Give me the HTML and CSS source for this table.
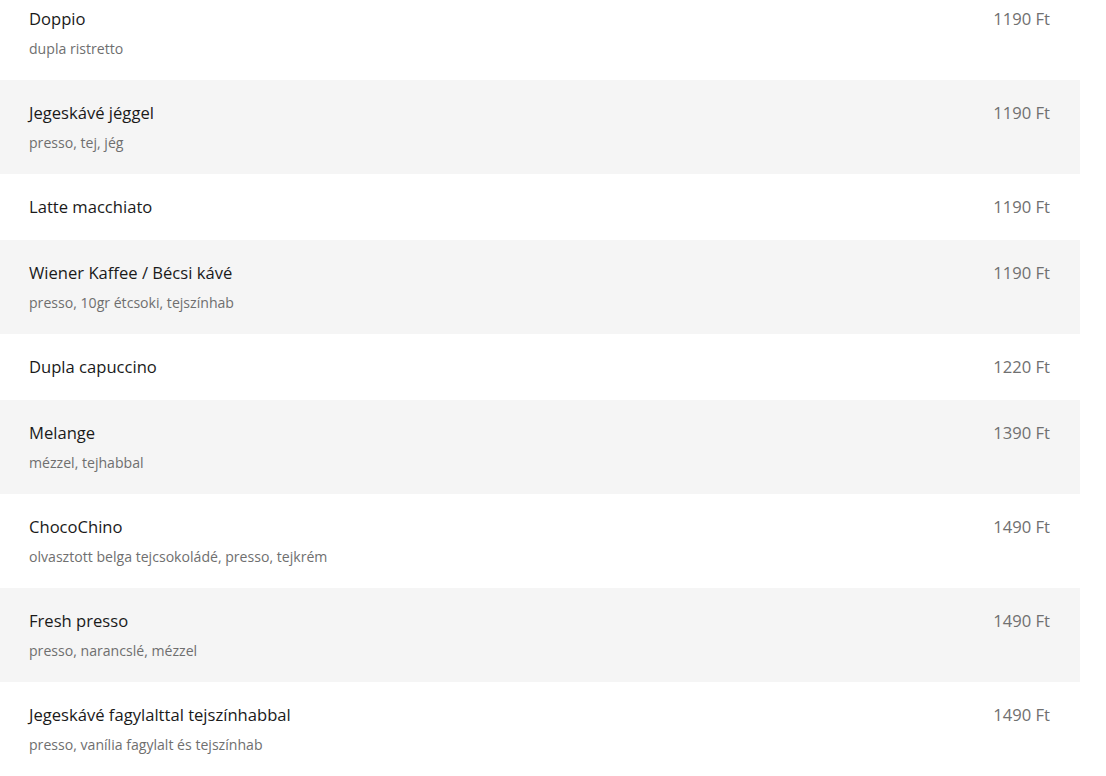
FILE: index.html
```html
<!DOCTYPE html>
<html lang="hu">
<head>
<meta charset="utf-8">
<link rel="stylesheet" href="styles.css">
</head>
<body>
<div class="menu">
  <div class="item"><div class="info"><div class="name">Doppio</div><div class="desc">dupla ristretto</div></div><div class="price">1190 Ft</div></div>
  <div class="item alt"><div class="info"><div class="name">Jegeskávé jéggel</div><div class="desc">presso, tej, jég</div></div><div class="price">1190 Ft</div></div>
  <div class="item"><div class="info"><div class="name">Latte macchiato</div></div><div class="price">1190 Ft</div></div>
  <div class="item alt"><div class="info"><div class="name">Wiener Kaffee / Bécsi kávé</div><div class="desc">presso, 10gr étcsoki, tejszínhab</div></div><div class="price">1190 Ft</div></div>
  <div class="item"><div class="info"><div class="name">Dupla capuccino</div></div><div class="price">1220 Ft</div></div>
  <div class="item alt"><div class="info"><div class="name">Melange</div><div class="desc">mézzel, tejhabbal</div></div><div class="price">1390 Ft</div></div>
  <div class="item"><div class="info"><div class="name">ChocoChino</div><div class="desc">olvasztott belga tejcsokoládé, presso, tejkrém</div></div><div class="price">1490 Ft</div></div>
  <div class="item alt"><div class="info"><div class="name">Fresh presso</div><div class="desc">presso, narancslé, mézzel</div></div><div class="price">1490 Ft</div></div>
  <div class="item"><div class="info"><div class="name">Jegeskávé fagylalttal tejszínhabbal</div><div class="desc">presso, vanília fagylalt és tejszínhab</div></div><div class="price">1490 Ft</div></div>
</div>
</body>
</html>
```
FILE: styles.css
```css
html, body { margin: 0; padding: 0; background: #fff; }
body { font-family: "Open Sans", "Noto Sans", sans-serif; }
.menu { width: 1080px; margin-top: -14px; }
.item { display: flex; justify-content: space-between; align-items: flex-start; padding: 21px 30px 21px 29px; background: #fff; }
.item.alt { background: #f5f5f5; }
.info { display: flex; flex-direction: column; gap: 7px; }
.name { font-size: 16.6px; line-height: 24px; height: 24px; color: #1a1a1a; }
.desc { font-size: 14.1px; line-height: 21px; height: 21px; color: #6f6f6f; }
.price { font-size: 16.6px; line-height: 24px; color: #707070; }
```
